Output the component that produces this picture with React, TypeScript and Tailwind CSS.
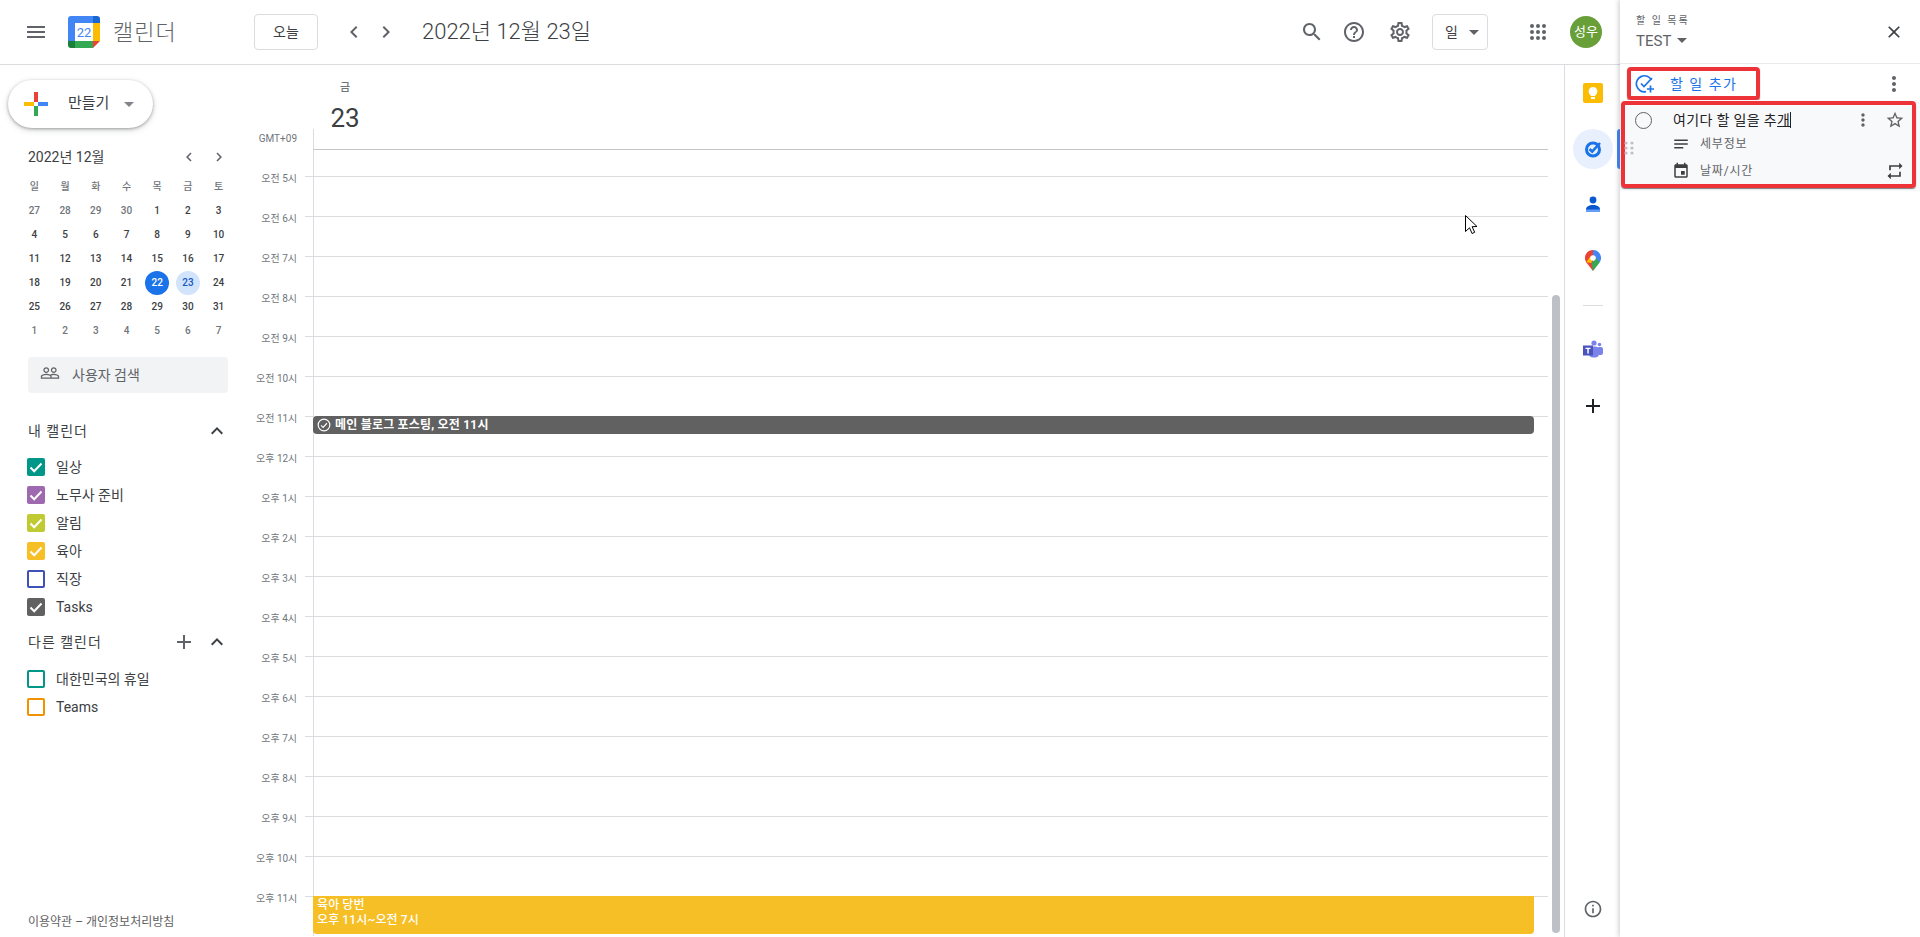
const P = {
  menu: 'M3 18h18v-2H3v2zm0-5h18v-2H3v2zm0-7v2h18V6H3z',
  search: 'M15.5 14h-.79l-.28-.27C15.41 12.59 16 11.11 16 9.5 16 5.91 13.09 3 9.5 3S3 5.91 3 9.5 5.91 16 9.5 16c1.61 0 3.09-.59 4.23-1.57l.27.28v.79l5 4.99L20.49 19l-4.99-5zm-6 0C7.01 14 5 11.99 5 9.5S7.01 5 9.5 5 14 7.01 14 9.5 11.99 14 9.5 14z',
  help: 'M11 18h2v-2h-2v2zm1-16C6.48 2 2 6.48 2 12s4.48 10 10 10 10-4.48 10-10S17.52 2 12 2zm0 18c-4.41 0-8-3.59-8-8s3.59-8 8-8 8 3.59 8 8-3.59 8-8 8zm0-14c-2.21 0-4 1.79-4 4h2c0-1.1.9-2 2-2s2 .9 2 2c0 2-3 1.75-3 5h2c0-2.25 3-2.5 3-5 0-2.21-1.79-4-4-4z',
  settings: 'M19.43 12.98c.04-.32.07-.64.07-.98 0-.34-.03-.66-.07-.98l2.11-1.65c.19-.15.24-.42.12-.64l-2-3.46c-.09-.16-.26-.25-.44-.25-.06 0-.12.01-.17.03l-2.49 1c-.52-.4-1.08-.73-1.69-.98l-.38-2.65C14.46 2.18 14.25 2 14 2h-4c-.25 0-.46.18-.49.42l-.38 2.65c-.61.25-1.17.59-1.69.98l-2.49-1c-.06-.02-.12-.03-.18-.03-.17 0-.34.09-.43.25l-2 3.46c-.13.22-.07.49.12.64l2.11 1.65c-.04.32-.07.65-.07.98 0 .33.03.66.07.98l-2.11 1.65c-.19.15-.24.42-.12.64l2 3.46c.09.16.26.25.44.25.06 0 .12-.01.17-.03l2.49-1c.52.4 1.08.73 1.69.98l.38 2.65c.03.24.24.42.49.42h4c.25 0 .46-.18.49-.42l.38-2.65c.61-.25 1.17-.59 1.69-.98l2.49 1c.06.02.12.03.18.03.17 0 .34-.09.43-.25l2-3.46c.12-.22.07-.49-.12-.64l-2.11-1.65zm-1.98-1.71c.04.31.05.52.05.73 0 .21-.02.43-.05.73l-.14 1.13.89.7 1.08.84-.7 1.21-1.27-.51-1.04-.42-.9.68c-.43.32-.84.56-1.25.73l-1.06.43-.16 1.13-.2 1.35h-1.4l-.19-1.35-.16-1.13-1.06-.43c-.43-.18-.83-.41-1.23-.71l-.91-.7-1.06.43-1.27.51-.7-1.21 1.08-.84.89-.7-.14-1.13c-.03-.31-.05-.54-.05-.74s.02-.43.05-.73l.14-1.13-.89-.7-1.08-.84.7-1.21 1.27.51 1.04.42.9-.68c.43-.32.84-.56 1.25-.73l1.06-.43.16-1.13.2-1.35h1.39l.19 1.35.16 1.13 1.06.43c.43.18.83.41 1.23.71l.91.7 1.06-.43 1.27-.51.7 1.21-1.07.85-.89.7.14 1.13zM12 8c-2.21 0-4 1.79-4 4s1.79 4 4 4 4-1.79 4-4-1.79-4-4-4zm0 6c-1.1 0-2-.9-2-2s.9-2 2-2 2 .9 2 2-.9 2-2 2z',
  left: 'M15.41 7.41L14 6l-6 6 6 6 1.41-1.41L10.83 12z',
  right: 'M10 6L8.59 7.41 13.17 12l-4.58 4.59L10 18l6-6z',
  up: 'M12 8l-6 6 1.41 1.41L12 10.83l4.59 4.58L18 14z',
  add: 'M19 13h-6v6h-2v-6H5v-2h6V5h2v6h6v2z',
  close: 'M19 6.41L17.59 5 12 10.59 6.41 5 5 6.41 10.59 12 5 17.59 6.41 19 12 13.41 17.59 19 19 17.59 13.41 12z',
  more: 'M12 8c1.1 0 2-.9 2-2s-.9-2-2-2-2 .9-2 2 .9 2 2 2zm0 2c-1.1 0-2 .9-2 2s.9 2 2 2 2-.9 2-2-.9-2-2-2zm0 6c-1.1 0-2 .9-2 2s.9 2 2 2 2-.9 2-2-.9-2-2-2z',
  star: 'M22 9.24l-7.19-.62L12 2 9.19 8.63 2 9.24l5.46 4.73L5.82 21 12 17.27 18.18 21l-1.63-7.03L22 9.24zM12 15.4l-3.76 2.27 1-4.28-3.32-2.88 4.38-.38L12 6.1l1.71 4.04 4.38.38-3.32 2.88 1 4.28L12 15.4z',
  notes: 'M3 18h12v-2H3v2zM3 6v2h18V6H3zm0 7h18v-2H3v2z',
  event: 'M17 12h-5v5h5v-5zM16 1v2H8V1H6v2H5c-1.11 0-1.99.9-1.99 2L3 19c0 1.1.89 2 2 2h14c1.1 0 2-.9 2-2V5c0-1.1-.9-2-2-2h-1V1h-2zm3 18H5V8h14v11z',
  repeat: 'M7 7h10v3l4-4-4-4v3H5v6h2V7zm10 10H7v-3l-4 4 4 4v-3h12v-6h-2v4z',
  info: 'M11 7h2v2h-2zm0 4h2v6h-2zm1-9C6.48 2 2 6.48 2 12s4.48 10 10 10 10-4.48 10-10S17.52 2 12 2zm0 18c-4.41 0-8-3.59-8-8s3.59-8 8-8 8 3.59 8 8-3.59 8-8 8z',
  people: 'M16.5 13c-1.2 0-3.07.34-4.5 1-1.43-.67-3.3-1-4.5-1C5.33 13 1 14.08 1 16.25V19h22v-2.75c0-2.17-4.33-3.25-6.5-3.25zm-4 4.5h-10v-1.25c0-.54 2.56-1.75 5-1.75s5 1.21 5 1.75v1.25zm9 0H14v-1.25c0-.46-.2-.86-.52-1.22.88-.3 1.96-.53 3.02-.53 2.44 0 5 1.21 5 1.75v1.25zM7.5 12c1.93 0 3.5-1.57 3.5-3.5S9.43 5 7.5 5 4 6.57 4 8.5 5.57 12 7.5 12zm0-5.5c1.1 0 2 .9 2 2s-.9 2-2 2-2-.9-2-2 .9-2 2-2zm9 5.5c1.93 0 3.5-1.57 3.5-3.5S18.43 5 16.5 5 13 6.57 13 8.5s1.57 3.5 3.5 3.5zm0-5.5c1.1 0 2 .9 2 2s-.9 2-2 2-2-.9-2-2 .9-2 2-2z',
};

function Icon({ d, className }: { d: string; className: string }) {
  return (
    <svg viewBox="0 0 24 24" fill="currentColor" className={className}>
      <path d={d} />
    </svg>
  );
}

function Caret({ className }: { className: string }) {
  return <span className={`w-0 h-0 border-x-[5px] border-x-transparent border-t-[5px] ${className}`} />;
}

function Logo() {
  return (
    <svg viewBox="0 0 32 32" className="w-8 h-8 shrink-0">
      <rect x="7" y="7" width="18" height="18" fill="#fff" />
      <path d="M25 0H3a3 3 0 0 0-3 3v4h32V7a7 7 0 0 0-7-7z" fill="#4285f4" />
      <path d="M0 7h7v18H0z" fill="#4285f4" />
      <path d="M25 7h7v18h-7z" fill="#fbbc04" />
      <path d="M7 25h18v7H7z" fill="#34a853" />
      <path d="M0 25h7v7H3a3 3 0 0 1-3-3z" fill="#188038" />
      <path d="M25 25h7l-7 7z" fill="#ea4335" />
      <path d="M25 0h4a3 3 0 0 1 3 3v4h-7z" fill="#1967d2" />
      <text x="16" y="21" textAnchor="middle" fontSize="13" fill="#4285f4" fontFamily="Roboto, sans-serif">22</text>
    </svg>
  );
}

function Header() {
  return (
    <header className="h-[65px] shrink-0 border-b border-[#dadce0] flex items-center text-[#3c4043]">
      <Icon d={P.menu} className="w-6 h-6 ml-6 text-[#5f6368]" />
      <div className="ml-5"><Logo /></div>
      <span className="ml-[13px] w-[78px] text-[22px] tracking-[1px] text-[#5f6368] font-light whitespace-nowrap">캘린더</span>
      <button className="ml-[63px] w-16 h-9 border border-[#dadce0] rounded text-sm">오늘</button>
      <Icon d={P.left} className="w-6 h-6 ml-6 text-[#5f6368]" />
      <Icon d={P.right} className="w-6 h-6 ml-2 text-[#5f6368]" />
      <span className="ml-6 text-[22px] whitespace-nowrap font-light -mt-[2px]">2022년 12월 23일</span>
      <div className="ml-auto flex items-center">
        <Icon d={P.search} className="w-6 h-6 text-[#5f6368]" />
        <Icon d={P.help} className="w-6 h-6 ml-[18px] text-[#5f6368]" />
        <Icon d={P.settings} className="w-6 h-6 ml-[22px] text-[#5f6368]" />
        <div className="ml-5 w-14 h-9 border border-[#dadce0] rounded flex items-center pl-3 justify-between pr-2">
          <span className="text-sm">일</span>
          <Caret className="border-t-[#5f6368]" />
        </div>
        <svg viewBox="0 0 16 16" fill="#5f6368" className="w-4 h-4 ml-[42px]">
          {[2, 8, 14].flatMap((y) => [2, 8, 14].map((x) => <circle key={`${x}-${y}`} cx={x} cy={y} r="2" />))}
        </svg>
        <div className="ml-[24px] mr-[18px] w-8 h-8 rounded-full bg-[#689f38] text-white text-[13px] flex items-center justify-center">성우</div>
      </div>
    </header>
  );
}

const WEEKS = [
  ['27', '28', '29', '30', '1', '2', '3'],
  ['4', '5', '6', '7', '8', '9', '10'],
  ['11', '12', '13', '14', '15', '16', '17'],
  ['18', '19', '20', '21', '22', '23', '24'],
  ['25', '26', '27', '28', '29', '30', '31'],
  ['1', '2', '3', '4', '5', '6', '7'],
];

function MiniCalendar() {
  return (
    <div>
      <div className="flex items-center h-6 pl-7 mt-[17px]">
        <span className="text-sm text-[#3c4043] w-[152px] whitespace-nowrap">2022년 12월</span>
        <Icon d={P.left} className="w-[18px] h-[18px] text-[#5f6368]" />
        <Icon d={P.right} className="w-[18px] h-[18px] ml-3 text-[#5f6368]" />
      </div>
      <div className="ml-[19px] mt-[6px] w-[215px] grid grid-cols-7 text-[10px] text-center">
        {['일', '월', '화', '수', '목', '금', '토'].map((d) => (
          <div key={d} className="h-6 leading-6 text-[#70757a] font-medium">{d}</div>
        ))}
        {WEEKS.flatMap((week, w) =>
          week.map((day, i) => {
            const muted = (w === 0 && i < 4) || w === 5;
            const cls =
              day === '22' ? 'bg-[#1a73e8] text-white rounded-full'
              : day === '23' && w === 3 ? 'bg-[#d2e3fc] text-[#185abc] rounded-full'
              : muted ? 'text-[#70757a]' : 'text-[#3c4043]';
            return (
              <div key={`${w}-${i}`} className="h-6 flex justify-center">
                <span className={`w-6 h-6 leading-6 font-medium ${cls}`}>{day}</span>
              </div>
            );
          })
        )}
      </div>
    </div>
  );
}

function CalItem({ label, color, checked }: { label: string; color: string; checked: boolean }) {
  return (
    <div className="h-7 flex items-center pl-[27px] text-sm text-[#3c4043]">
      <svg viewBox="0 0 18 18" className="w-[18px] h-[18px] shrink-0">
        <rect x={checked ? 0 : 1} y={checked ? 0 : 1} width={checked ? 18 : 16} height={checked ? 18 : 16} rx={checked ? 2 : 1} fill={checked ? color : '#fff'} stroke={checked ? 'none' : color} strokeWidth="2" />
        {checked && <path d="M3.5 9.5l3.7 3.7 7.3-7.7" fill="none" stroke="#fff" strokeWidth="2" />}
      </svg>
      <span className="ml-[11px]">{label}</span>
    </div>
  );
}

function Sidebar() {
  return (
    <aside className="w-64 shrink-0 flex flex-col relative">
      <button className="mt-[15px] ml-2 w-[145px] h-12 rounded-full bg-white shadow-[0_1px_3px_rgba(60,64,67,0.4),0_2px_6px_rgba(60,64,67,0.2)] flex items-center shrink-0">
        <svg viewBox="0 0 36 36" className="w-9 h-9 ml-[10px] shrink-0">
          <path d="M16 16h4V6h-4z" fill="#ea4335" />
          <path d="M20 16v4h10v-4z" fill="#4285f4" />
          <path d="M16 20v10h4V20z" fill="#34a853" />
          <path d="M6 16v4h10v-4z" fill="#fbbc04" />
        </svg>
        <span className="ml-[14px] text-[15px] text-[#3c4043] whitespace-nowrap -mt-[2px]">만들기</span>
        <Caret className="ml-[15px] border-t-[#80868b]" />
      </button>
      <MiniCalendar />
      <div className="mt-[14px] ml-7 w-[200px] h-9 rounded bg-[#f1f3f4] flex items-center pl-3 text-[#5f6368] shrink-0">
        <Icon d={P.people} className="w-5 h-5 -mt-1" />
        <span className="ml-[12px] text-sm">사용자 검색</span>
      </div>
      <div className="mt-[26px] h-6 pl-7 pr-[27px] flex items-center justify-between">
        <span className="text-sm tracking-[1px] text-[#3c4043]">내 캘린더</span>
        <Icon d={P.up} className="w-6 h-6 text-[#3c4043]" />
      </div>
      <div className="mt-[10px]">
        <CalItem label="일상" color="#009688" checked />
        <CalItem label="노무사 준비" color="#9e69af" checked />
        <CalItem label="알림" color="#c0ca33" checked />
        <CalItem label="육아" color="#f6bf26" checked />
        <CalItem label="직장" color="#3f51b5" checked={false} />
        <CalItem label="Tasks" color="#616161" checked />
      </div>
      <div className="mt-[5px] h-8 pl-7 pr-[27px] flex items-center">
        <span className="text-sm tracking-[1px] text-[#3c4043]">다른 캘린더</span>
        <Icon d={P.add} className="w-6 h-6 ml-auto text-[#5f6368]" />
        <Icon d={P.up} className="w-6 h-6 ml-[9px] text-[#3c4043]" />
      </div>
      <div className="mt-[7px]">
        <CalItem label="대한민국의 휴일" color="#009688" checked={false} />
        <CalItem label="Teams" color="#f09300" checked={false} />
      </div>
      <div className="mt-auto mb-[7px] pl-[28px] text-xs text-[#616161]">이용약관 – 개인정보처리방침</div>
    </aside>
  );
}

const HOURS = ['오전 5시', '오전 6시', '오전 7시', '오전 8시', '오전 9시', '오전 10시', '오전 11시', '오후 12시', '오후 1시', '오후 2시', '오후 3시', '오후 4시', '오후 5시', '오후 6시', '오후 7시', '오후 8시', '오후 9시', '오후 10시', '오후 11시'];

function Grid() {
  return (
    <main className="flex-1 min-w-0 flex">
      <div className="flex-1 min-w-0 flex flex-col overflow-hidden">
        <div className="h-[64px] shrink-0 relative">
          <div className="pl-[57px] w-[121px] flex flex-col items-center text-[#3c4043]">
            <span className="mt-[14px] text-[11px] leading-[18px] text-[#70757a] font-medium">금</span>
            <span className="mt-[5px] text-[26px] leading-8">23</span>
          </div>
        </div>
        <div className="h-5 shrink-0 flex">
          <div className="w-[49px] pr-2 text-right text-[10px] leading-[20px] text-[#70757a]">GMT+09</div>
          <div className="w-2" />
          <div className="flex-1 border-l border-[#dadce0]" />
        </div>
        <div className="h-[27px] shrink-0 flex">
          <div className="w-[57px]" />
          <div className="flex-1 border-l border-t border-[#c4c7ca] border-l-[#dadce0]" />
        </div>
        {HOURS.map((h) => (
          <div key={h} className="h-10 shrink-0 flex">
            <div className="w-[49px] pr-2 text-right text-[10px] leading-4 -mt-[5px] h-4 whitespace-nowrap text-[#70757a]">{h}</div>
            <div className="w-2 border-t border-[#dadce0]" />
            <div className="flex-1 border-t border-l border-[#dadce0] relative">
              {h === '오전 11시' && (
                <div className="absolute -top-px -left-px right-[14px] h-[18px] bg-[#616161] rounded text-white text-xs font-bold tracking-[0.2px] flex items-center pl-[4px]">
                  <svg viewBox="0 0 24 24" fill="none" stroke="currentColor" strokeWidth="2" className="w-[14px] h-[14px]">
                    <circle cx="12" cy="12" r="10" />
                    <path d="M7 12.5l3.5 3.5L17 9" />
                  </svg>
                  <span className="ml-[4px] whitespace-nowrap">메인 블로그 포스팅, 오전 11시</span>
                </div>
              )}
              {h === '오후 11시' && (
                <div className="absolute -top-px -left-px right-[14px] h-[38px] bg-[#f6bf26] rounded-b text-white text-xs tracking-[0.1px] leading-[15px] font-medium pl-[4px] pt-[2px]">
                  <div>육아 당번</div>
                  <div>오후 11시~오전 7시</div>
                </div>
              )}
            </div>
          </div>
        ))}
      </div>
      <div className="w-4 shrink-0 flex justify-center">
        <div className="mt-[230px] mb-[4px] w-2 rounded bg-[#bdc1c6]" />
      </div>
    </main>
  );
}

function Rail() {
  return (
    <nav className="w-[56px] shrink-0 border-l border-[#dadce0] flex flex-col items-center relative">
      <svg viewBox="0 0 20 20" className="w-5 h-5 mt-[18px]">
        <rect width="20" height="20" rx="2" fill="#fbbc04" />
        <path d="M10 4a4.3 4.3 0 0 0-2.4 7.9V13h4.8v-1.1A4.3 4.3 0 0 0 10 4z" fill="#fff" />
        <rect x="8" y="14" width="4" height="2" fill="#fff" />
      </svg>
      <div className="mt-[26px] w-10 h-10 rounded-full bg-[#e8f0fe] flex items-center justify-center">
        <svg viewBox="0 0 20 20" className="w-5 h-5">
          <circle cx="10" cy="10.5" r="6.5" fill="none" stroke="#1a73e8" strokeWidth="3" />
          <path d="M6.5 10l2.7 2.7L17 4" fill="none" stroke="#1a73e8" strokeWidth="2.6" />
        </svg>
      </div>
      <div className="absolute right-0 top-[64px] w-[3px] h-10 bg-[#4285f4] rounded-l" />
      <svg viewBox="0 0 20 20" className="w-5 h-5 mt-[26px]">
        <circle cx="10" cy="5" r="3.4" fill="#0b57d0" />
        <path d="M3 17v-2.5C3 11.5 6 10 10 10s7 1.5 7 4.5V17z" fill="#0b57d0" />
        <path d="M3 17v-2.5h14V17z" fill="#669df6" />
      </svg>
      <svg viewBox="0 0 20 24" className="w-5 h-6 mt-[34px]">
        <path d="M10 1a8 8 0 0 0-6.8 12.2L10 22z" fill="#ea4335" />
        <path d="M10 1a8 8 0 0 1 6.8 12.2L10 9z" fill="#4285f4" />
        <path d="M3.2 13.2L7 8l3-1-1.5 7z" fill="#fbbc04" />
        <path d="M10 22l6.8-8.8L13 9l-4.5 5z" fill="#34a853" />
        <circle cx="10" cy="9" r="2.8" fill="#fff" />
      </svg>
      <div className="mt-[32px] w-5 h-px bg-[#dadce0]" />
      <svg viewBox="0 0 20 20" className="w-5 h-5 mt-[34px]">
        <circle cx="16.5" cy="4.5" r="1.8" fill="#7b83eb" />
        <rect x="14" y="7" width="6" height="8" rx="2" fill="#7b83eb" />
        <circle cx="11" cy="3" r="2.6" fill="#7b83eb" />
        <rect x="6" y="6.5" width="10" height="11" rx="4" fill="#7b83eb" />
        <rect x="0" y="5.5" width="10" height="10" fill="#4b53bc" />
        <path d="M2.5 7.8h5v1.3H5.8v4.3H4.3V9.1H2.5z" fill="#fff" />
      </svg>
      <Icon d={P.add} className="w-6 h-6 mt-[34px] text-[#202124]" />
      <Icon d={P.info} className="w-5 h-5 mt-auto mb-[18px] text-[#5f6368]" />
    </nav>
  );
}

function TasksPanel() {
  return (
    <section className="w-[300px] shrink-0 shadow-[-2px_0_4px_rgba(60,64,67,0.2)] bg-white flex flex-col relative z-10">
      <div className="h-16 shrink-0 border-b border-[#e8eaed] flex items-center pl-4 pr-4 justify-between">
        <div className="text-[#5f6368]">
          <div className="text-[10px] leading-4 tracking-[2px]">할 일 목록</div>
          <div className="flex items-center text-[15px] leading-[20px] mt-[2px] text-[#5f6368]">
            TEST
            <Caret className="ml-[6px] border-t-[#5f6368]" />
          </div>
        </div>
        <Icon d={P.close} className="w-5 h-5 text-[#3c4043]" />
      </div>
      <div className="h-[36px] shrink-0 flex items-center pl-[7px] pr-[14px] pt-[3px]">
        <div className="w-[133px] h-[33px] border-4 border-[#ee3338] rounded shadow-[0_1px_1px_rgba(0,0,0,0.5)] flex items-center pl-[4px]">
          <svg viewBox="0 0 20 20" fill="none" stroke="#1a73e8" strokeWidth="1.7" className="w-5 h-5 shrink-0">
            <path d="M16.5 6.2A8 8 0 1 0 11 17.6" />
            <path d="M6 9.5l3 3L17 4" />
            <path d="M15.5 11.5v7M12 15h7" />
          </svg>
          <span className="ml-[15px] text-sm tracking-[1.5px] text-[#1a73e8] whitespace-nowrap">할 일 추가</span>
        </div>
        <Icon d={P.more} className="w-6 h-6 ml-auto text-[#5f6368]" />
      </div>
      <div className="h-[91px] shrink-0 bg-[#f8f9fa] pl-px pr-1 pt-px relative">
        <div className="absolute left-[4px] top-[41px] text-[#bdc1c6] z-10">
          <svg viewBox="0 0 10 14" fill="currentColor" className="w-[10px] h-[14px]">
            {[2, 7, 12].flatMap((y) => [2, 8].map((x) => <circle key={`${x}-${y}`} cx={x} cy={y} r="1.6" />))}
          </svg>
        </div>
        <div className="h-[87px] border-4 border-[#ee3338] rounded shadow-[0_1px_1px_rgba(0,0,0,0.5)] flex flex-col">
          <div className="h-[30px] shrink-0 flex items-center pl-[10px] pr-[7px]">
            <span className="w-[17px] h-[17px] rounded-full border-[1.5px] border-[#5f6368] shrink-0" />
            <span className="ml-[21px] text-sm tracking-[0.35px] text-[#202124] whitespace-nowrap">여기다 할 일을 추<span className="underline">개</span><span className="border-r border-[#202124]" /></span>
            <Icon d={P.more} className="w-5 h-5 ml-auto text-[#5f6368]" />
            <Icon d={P.star} className="w-5 h-5 ml-[12px] text-[#5f6368]" />
          </div>
          <div className="h-[18px] shrink-0 flex items-center pl-[47px] text-xs text-[#5f6368]">
            <Icon d={P.notes} className="w-[18px] h-[18px] text-[#3c4043]" />
            <span className="ml-[10px] tracking-[0.8px]">세부정보</span>
          </div>
          <div className="h-[31px] shrink-0 flex items-center pt-[4px] pl-[47px] pr-[7px] text-xs text-[#5f6368]">
            <Icon d={P.event} className="w-[18px] h-[18px] text-[#3c4043]" />
            <span className="ml-[10px] tracking-[0.8px]">날짜/시간</span>
            <Icon d={P.repeat} className="w-5 h-5 ml-auto text-[#3c4043]" />
          </div>
        </div>
      </div>
    </section>
  );
}

export default function App() {
  return (
    <div className="h-[937px] w-[1920px] flex overflow-hidden bg-white relative font-['Roboto','Noto_Sans_CJK_KR',sans-serif]">
      <div className="w-[1620px] shrink-0 flex flex-col">
        <Header />
        <div className="flex-1 min-h-0 flex">
          <Sidebar />
          <Grid />
          <Rail />
        </div>
      </div>
      <TasksPanel />
      <svg viewBox="0 0 12 19" className="absolute left-[1465px] top-[215px] w-3 h-[19px]">
        <path d="M.5.5v16l4-3.7 2.6 5.7 2.6-1.2-2.6-5.6 4.9-.2z" fill="#fff" stroke="#000" />
      </svg>
    </div>
  );
}
